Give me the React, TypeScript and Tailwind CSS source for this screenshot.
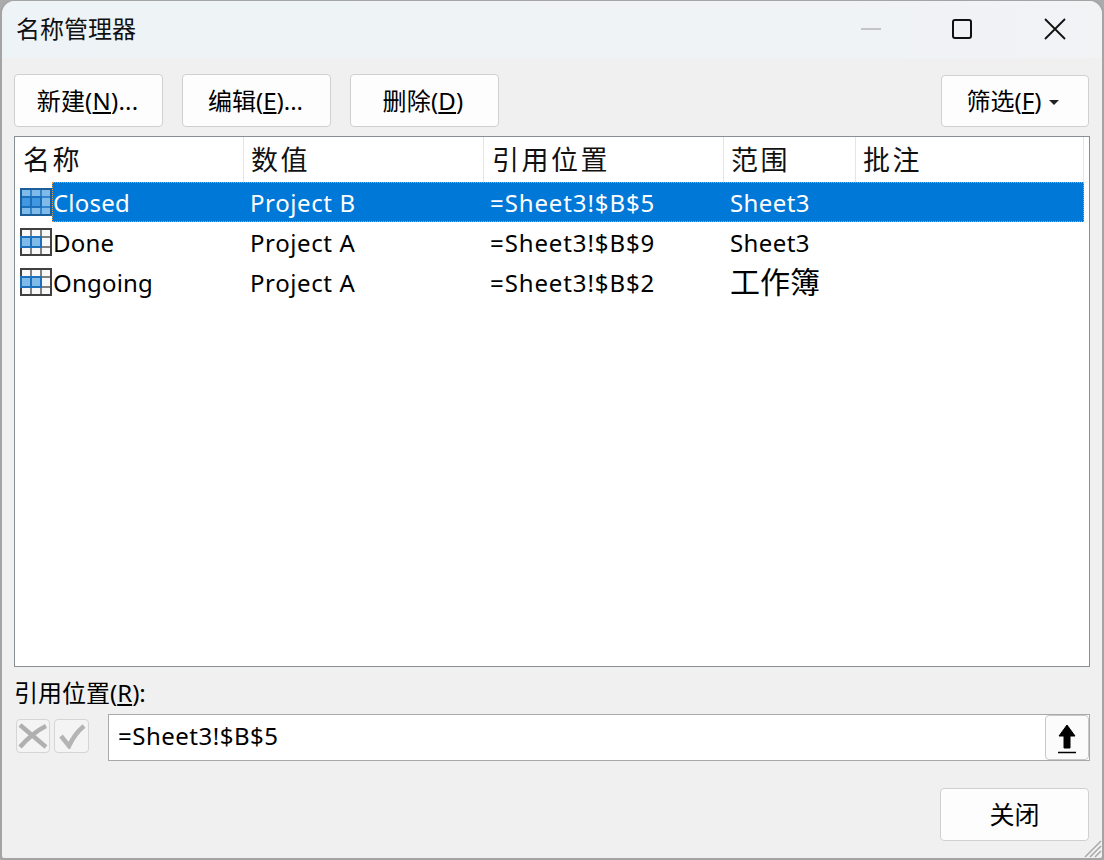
const FONT = "font-['Noto_Sans','Noto_Sans_CJK_SC',sans-serif]";

const COLS = [
  { label: "名称", width: "w-[229px]", pad: "pl-[8px]" },
  { label: "数值", width: "w-[240px]", pad: "pl-[7px]" },
  { label: "引用位置", width: "w-[240px]", pad: "pl-[8px]" },
  { label: "范围", width: "w-[132px]", pad: "pl-[7px]" },
  { label: "批注", width: "w-[228px]", pad: "pl-[7px]" },
];

const ROWS = [
  { name: "Closed", value: "Project B", ref: "=Sheet3!$B$5", scope: "Sheet3" },
  { name: "Done", value: "Project A", ref: "=Sheet3!$B$9", scope: "Sheet3" },
  { name: "Ongoing", value: "Project A", ref: "=Sheet3!$B$2", scope: "工作簿" },
];

function Btn({ children, className }: { children: React.ReactNode; className: string }) {
  return (
    <div
      className={`flex items-center justify-center rounded-[4px] border border-[#d0d0d0] bg-[#fdfdfd] text-[24px] text-black ${className}`}
    >
      {children}
    </div>
  );
}

function NameIcon({ selected }: { selected: boolean }) {
  const frame = selected ? "#1b5e99" : "#404040";
  const cell = selected ? "#7fbae8" : "#f8f8f8";
  const line = selected ? "#2f86cf" : "#808080";
  const xs = [2, 12, 22];
  const ys = [2, 10, 20];
  const hs = [6, 8, 6];
  return (
    <svg width="32" height="28" viewBox="0 0 32 28" className="shrink-0" shapeRendering="crispEdges">
      <rect width="32" height="28" fill={line} />
      {xs.map((x) =>
        ys.map((y, r) => <rect key={`${x}-${y}`} x={x} y={y} width="8" height={hs[r]} fill={cell} />),
      )}
      {/* highlighted band */}
      <rect x="0" y="8" width="22" height="12" fill="#1b6fbb" />
      <rect x="2" y="10" width="8" height="8" fill={selected ? "#4198e0" : "#7fbae8"} />
      <rect x="12" y="10" width="8" height="8" fill={selected ? "#4198e0" : "#7fbae8"} />
      <path d="M0 0H32V28H0ZM2 2V26H30V2Z" fill={frame} fillRule="evenodd" />
      {!selected && <rect x="0" y="8" width="2" height="12" fill="#1b6fbb" />}
    </svg>
  );
}

export default function App() {
  return (
    <div className={`h-[860px] w-[1104px] overflow-hidden bg-[#ababab] ${FONT}`}>
      <div className="relative flex h-[860px] w-[1104px] flex-col rounded-t-[14px] rounded-b-[4px] border-x-2 border-b-2 border-t border-[#a4a4a4] bg-[#f0f0f0]">
        {/* title bar */}
        <div className="flex h-[57px] shrink-0 items-center rounded-t-[14px] bg-gradient-to-r from-[#edf3f6] to-[#f1f3f5] pb-[2px] pl-[14px]">
          <span className="text-[24px] leading-none text-[#111]">名称管理器</span>
          <div className="ml-auto flex items-center">
            <div className="mr-[71px] h-[2px] w-5 bg-[#c4c4c4]" />
            <div className="mr-[72px] h-[20px] w-[20px] rounded-[3px] border-2 border-[#111]" />
            <svg width="22" height="22" viewBox="0 0 22 22" className="mr-[36px]">
              <path d="M1 1L21 21M21 1L1 21" stroke="#111" strokeWidth="1.8" fill="none" />
            </svg>
          </div>
        </div>

        {/* toolbar */}
        <div className="mt-[16px] flex items-start pl-[12px] pr-[13px]">
          <Btn className="h-[53px] w-[149px] pr-[2px] tracking-[0.2px]">
            新建(<span className="underline">N</span>)...
          </Btn>
          <Btn className="ml-[19px] h-[53px] w-[149px] pr-[2px]">
            编辑(<span className="underline">E</span>)...
          </Btn>
          <Btn className="ml-[19px] h-[53px] w-[149px] pr-[3px] tracking-[0.2px]">
            删除(<span className="underline">D</span>)
          </Btn>
          <Btn className="ml-auto mt-px h-[52px] w-[148px] gap-[8px] pr-[4px]">
            <span>
              筛选(<span className="underline">F</span>)
            </span>
            <span className="mt-[2px] h-0 w-0 border-x-[5px] border-t-[5px] border-x-transparent border-t-[#222]" />
          </Btn>
        </div>

        {/* list */}
        <div className="mx-[12px] mt-[9px] h-[531px] overflow-hidden border border-[#8a8f96] bg-white">
          <div className="flex h-[45px]">
            {COLS.map((c) => (
              <div
                key={c.label}
                className={`flex shrink-0 items-center border-r border-[#e5e5e5] pt-[2px] text-[27px] tracking-[2.5px] text-[#111] ${c.width} ${c.pad}`}
              >
                {c.label}
              </div>
            ))}
          </div>
          {ROWS.map((r, i) => {
            const sel = i === 0;
            return (
              <div key={r.name} className="flex h-[40px] w-[1069px] items-center pl-[5px] text-[24px]">
                <NameIcon selected={sel} />
                <div
                  className={`flex h-[40px] flex-1 items-center border border-dotted pt-[2px] ${
                    sel ? "border-[#f09a3e] bg-[#0078d7] text-white" : "border-transparent text-black"
                  }`}
                >
                  <span className="w-[197px] tracking-[0.2px]">{r.name}</span>
                  <span className="w-[240px] tracking-[0.6px]">{r.value}</span>
                  <span className="w-[240px] tracking-[0.9px]">{r.ref}</span>
                  <span
                    className={
                      r.scope === "工作簿" ? "mb-[3px] text-[30px] leading-none" : "tracking-[0.4px]"
                    }
                  >
                    {r.scope}
                  </span>
                </div>
              </div>
            );
          })}
        </div>

        {/* reference box */}
        <div className="ml-[12px] mt-[13px] h-[25px] text-[24px] leading-[25px] text-black">
          引用位置(<span className="underline">R</span>):
        </div>
        <div className="mt-[9px] flex items-start pl-[14px] pr-[12px]">
          <div className="mt-[5px] flex h-[34px] w-[34px] items-center justify-center rounded-[4px] border border-[#d5d5d5] bg-[#f4f4f4]">
            <svg width="30" height="26" viewBox="0 0 30 26">
              <path d="M2 2L28 24M2 24C10 15 18 8 28 3" stroke="#b0b0b0" strokeWidth="4.5" fill="none" />
            </svg>
          </div>
          <div className="ml-[4px] mt-[5px] flex h-[34px] w-[35px] items-center justify-center rounded-[4px] border border-[#d5d5d5] bg-[#f4f4f4]">
            <svg width="28" height="26" viewBox="0 0 28 26">
              <path d="M3 13L11 23C15 14 20 8 26 3" stroke="#b4b4b4" strokeWidth="4.5" fill="none" />
            </svg>
          </div>
          <div className="relative ml-[19px] flex h-[47px] flex-1 items-center border border-[#a8a8ad] bg-white pb-[4px] pl-[9px] text-[24px] tracking-[0.5px] text-black">
            =Sheet3!$B$5
            <div className="absolute right-0 top-0 flex h-[45px] w-[44px] items-center justify-center rounded-[4px] border border-[#c8c8c8] bg-[#fbfbfb]">
              <svg width="22" height="32" viewBox="0 0 22 32">
                <path d="M11 3L19 14H14V26H8V14H3Z" fill="#000" stroke="#000" strokeWidth="1" />
                <path d="M2 30.5H20" stroke="#000" strokeWidth="1.5" />
              </svg>
            </div>
          </div>
        </div>

        <div className="mt-[27px] flex justify-end pr-[13px]">
          <Btn className="h-[53px] w-[149px] text-[25px]">关闭</Btn>
        </div>

        {/* resize grip */}
        <svg width="20" height="20" viewBox="0 0 20 20" className="absolute bottom-0 right-0">
          <path d="M19 3L3 19M19 8L8 19M19 13L13 19" stroke="#a8a8a8" strokeWidth="1.5" fill="none" />
        </svg>
      </div>
    </div>
  );
}
